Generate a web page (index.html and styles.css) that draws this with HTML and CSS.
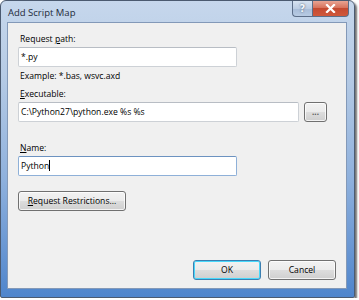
FILE: index.html
```html
<!DOCTYPE html>
<html>
<head>
<meta charset="utf-8">
<link rel="stylesheet" href="styles.css">
</head>
<body>
<div class="window">
  <div class="titlebar">
    <span class="title">Add Script Map</span>
    <div class="caption-btns">
      <div class="cbtn help">?</div>
      <div class="cbtn close">
        <svg width="11" height="9" viewBox="0 0 11 9"><path d="M2 1 L9 8 M9 1 L2 8" stroke="#fff" stroke-width="2.2" stroke-linecap="square"/></svg>
      </div>
    </div>
  </div>
  <div class="client">
    <div class="label"><span>Request <u>p</u>ath:</span></div>
    <div class="input short">*.py</div>
    <div class="hint">Example: *.bas, wsvc.axd</div>
    <div class="label"><u>E</u>xecutable:</div>
    <div class="row">
      <div class="input long">C:\Python27\python.exe %s %s</div>
      <div class="btn browse">...</div>
    </div>
    <div class="label name-label"><u>N</u>ame:</div>
    <div class="input short focused">Python<span class="caret"></span></div>
    <div class="btn restrict"><u>R</u>equest Restrictions...</div>
    <div class="spacer"></div>
    <div class="footer">
      <div class="btn ok">OK</div>
      <div class="btn cancel">Cancel</div>
    </div>
  </div>
</div>
</body>
</html>
```
FILE: styles.css
```css
html, body {
  margin: 0;
  padding: 0;
  background: #ffffff;
}
body {
  font-family: "Open Sans", "Noto Sans", sans-serif;
  font-size: 8.6px;
  color: #000;
}
.window {
  box-sizing: border-box;
  width: 355px;
  height: 298px;
  border: 1px solid #4b5a70;
  border-radius: 6px 6px 2px 2px;
  background: linear-gradient(180deg, #c6d7ec 0%, #b6cbe5 25%, #8fb1dd 60%, #4f85cc 100%);
  padding: 0 7px 8px 6px;
  display: flex;
  flex-direction: column;
  box-shadow: 2px 2px 2px rgba(0,0,0,0.55);
}
.titlebar {
  height: 21px;
  display: flex;
  align-items: flex-start;
  flex-shrink: 0;
}
.title {
  font-family: "Open Sans", "Noto Sans", sans-serif;
  font-size: 9.5px;
  color: #1e2a3a;
  margin-top: 5px;
  margin-left: 1px;
}
.caption-btns {
  margin-left: auto;
  margin-right: -2px;
  display: flex;
}
.cbtn {
  height: 16px;
  box-sizing: border-box;
  border: 1px solid #5c6e88;
  border-top: none;
  display: flex;
  align-items: center;
  justify-content: center;
}
.help {
  width: 20px;
  border-radius: 0 0 0 4px;
  border-right: none;
  background: linear-gradient(180deg, #d7e3f1 0%, #bccde3 50%, #a7bcd8 51%, #b8cbe3 100%);
  color: #f4f7fb;
  font-weight: bold;
  font-size: 10px;
  text-shadow: 0 0 2px #3a4a60;
  font-family: "DejaVu Sans", sans-serif;
}
.close {
  width: 37px;
  border-radius: 0 0 4px 0;
  background: linear-gradient(180deg, #e8a493 0%, #d7725c 45%, #c44a31 50%, #d0583b 100%);
}
.client {
  flex: 1;
  background: #f0f0f0;
  border: 1px solid #8399b8;
  padding: 9px 10px 8px 10px;
  display: flex;
  flex-direction: column;
}
.label {
  height: 15px;
  line-height: 15px;
  padding-left: 2px;
}
.hint {
  height: 15px;
  line-height: 15px;
  padding-left: 2px;
  margin-top: 2px;
  margin-bottom: 3px;
}
.name-label {
  margin-top: 19px;
}
.input {
  box-sizing: border-box;
  height: 20px;
  line-height: 18px;
  background: #fff;
  border: 1px solid #cdd1d6;
  border-top-color: #b8bdc4;
  border-radius: 2px;
  padding-left: 2px;
  white-space: nowrap;
}
.short {
  width: 219px;
}
.long {
  width: 281px;
}
.focused {
  border-color: #8eb0d8;
  border-top-color: #6c92c0;
}
.caret {
  display: inline-block;
  width: 1px;
  height: 11px;
  background: #000;
  vertical-align: -2px;
}
.row {
  display: flex;
  align-items: flex-start;
}
.btn {
  box-sizing: border-box;
  height: 20px;
  border: 1px solid #707070;
  border-radius: 3px;
  background: linear-gradient(180deg, #f2f2f2 0%, #ebebeb 50%, #dddddd 51%, #cfcfcf 100%);
  box-shadow: inset 0 0 0 1px rgba(255,255,255,0.75);
  display: flex;
  align-items: center;
  justify-content: center;
  white-space: nowrap;
}
.browse {
  width: 23px;
  margin-left: 5px;
  font-size: 8px;
  line-height: 1;
  color: #555;
  font-weight: bold;
}
.restrict {
  width: 108px;
  margin-top: 15px;
}
.spacer {
  flex: 1;
}
.footer {
  display: flex;
  justify-content: flex-end;
  gap: 7px;
}
.ok, .cancel {
  width: 68px;
  height: 20px;
}
.ok {
  border-color: #3c7fb1;
  box-shadow: inset 0 0 0 1px #48d8fb;
}
```
